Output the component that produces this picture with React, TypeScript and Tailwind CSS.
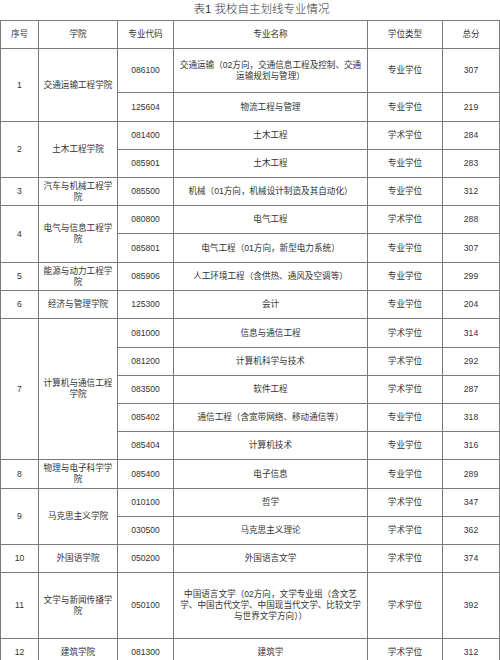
import React from 'react'

interface Major {
  code: string
  name: string
  type: string
  score: string
}

interface College {
  no: string
  name: string
  majors: Major[]
}

const colleges: College[] = [
  {
    no: '1',
    name: '交通运输工程学院',
    majors: [
      { code: '086100', name: '交通运输（02方向，交通信息工程及控制、交通\n运输规划与管理）', type: '专业学位', score: '307' },
      { code: '125604', name: '物流工程与管理', type: '专业学位', score: '219' },
    ],
  },
  {
    no: '2',
    name: '土木工程学院',
    majors: [
      { code: '081400', name: '土木工程', type: '学术学位', score: '284' },
      { code: '085901', name: '土木工程', type: '专业学位', score: '283' },
    ],
  },
  {
    no: '3',
    name: '汽车与机械工程学\n院',
    majors: [{ code: '085500', name: '机械（01方向，机械设计制造及其自动化）', type: '专业学位', score: '312' }],
  },
  {
    no: '4',
    name: '电气与信息工程学\n院',
    majors: [
      { code: '080800', name: '电气工程', type: '学术学位', score: '288' },
      { code: '085801', name: '电气工程（01方向，新型电力系统）', type: '专业学位', score: '307' },
    ],
  },
  {
    no: '5',
    name: '能源与动力工程学\n院',
    majors: [{ code: '085906', name: '人工环境工程（含供热、通风及空调等）', type: '专业学位', score: '299' }],
  },
  {
    no: '6',
    name: '经济与管理学院',
    majors: [{ code: '125300', name: '会计', type: '专业学位', score: '204' }],
  },
  {
    no: '7',
    name: '计算机与通信工程\n学院',
    majors: [
      { code: '081000', name: '信息与通信工程', type: '学术学位', score: '314' },
      { code: '081200', name: '计算机科学与技术', type: '学术学位', score: '292' },
      { code: '083500', name: '软件工程', type: '学术学位', score: '287' },
      { code: '085402', name: '通信工程（含宽带网络、移动通信等）', type: '专业学位', score: '318' },
      { code: '085404', name: '计算机技术', type: '专业学位', score: '316' },
    ],
  },
  {
    no: '8',
    name: '物理与电子科学学\n院',
    majors: [{ code: '085400', name: '电子信息', type: '专业学位', score: '289' }],
  },
  {
    no: '9',
    name: '马克思主义学院',
    majors: [
      { code: '010100', name: '哲学', type: '学术学位', score: '347' },
      { code: '030500', name: '马克思主义理论', type: '学术学位', score: '362' },
    ],
  },
  {
    no: '10',
    name: '外国语学院',
    majors: [{ code: '050200', name: '外国语言文学', type: '学术学位', score: '374' }],
  },
  {
    no: '11',
    name: '文学与新闻传播学\n院',
    majors: [
      {
        code: '050100',
        name: '中国语言文学（02方向，文学专业组（含文艺\n学、中国古代文学、中国现当代文学、比较文学\n与世界文学方向））',
        type: '学术学位',
        score: '392',
      },
    ],
  },
  {
    no: '12',
    name: '建筑学院',
    majors: [{ code: '081300', name: '建筑学', type: '学术学位', score: '312' }],
  },
]

const spanClass: Record<number, string> = {
  1: '',
  2: 'row-span-2',
  5: 'row-span-5',
}

function Cell({ children, className = '' }: { children: React.ReactNode; className?: string }) {
  return (
    <div className={`flex items-center justify-center bg-white px-1 text-center whitespace-pre-line leading-[11px] ${className}`}>
      {children}
    </div>
  )
}

export default function App() {
  const headers = ['序号', '学院', '专业代码', '专业名称', '学位类型', '总分']

  return (
    <div className="w-[500px] h-[660px] overflow-hidden bg-white text-[#333] font-['Liberation_Sans','Noto_Sans_CJK_SC',sans-serif]">
      <div className="h-[20px] flex items-center justify-center pl-[23px] text-[11.5px] font-light text-[#333]">
        表1 我校自主划线专业情况
      </div>
      <div className="grid grid-cols-[37px_78px_55px_193px_74px_56px] grid-rows-[27px_43px_28px_27px_27px_27px_27px_28px_27px_27px_28px_27px_27px_27px_27px_28px_27px_27px_27px_65px_27px] gap-px p-px bg-[#7a7a7a] text-[8.6px]">
        {headers.map((h) => (
          <Cell key={h}>{h}</Cell>
        ))}
        {colleges.map((c) =>
          c.majors.map((m, i) => (
            <React.Fragment key={c.no + m.code}>
              {i === 0 && (
                <>
                  <Cell className={spanClass[c.majors.length]}>{c.no}</Cell>
                  <Cell className={spanClass[c.majors.length]}>{c.name}</Cell>
                </>
              )}
              <Cell>{m.code}</Cell>
              <Cell>{m.name}</Cell>
              <Cell>{m.type}</Cell>
              <Cell>{m.score}</Cell>
            </React.Fragment>
          ))
        )}
      </div>
    </div>
  )
}
